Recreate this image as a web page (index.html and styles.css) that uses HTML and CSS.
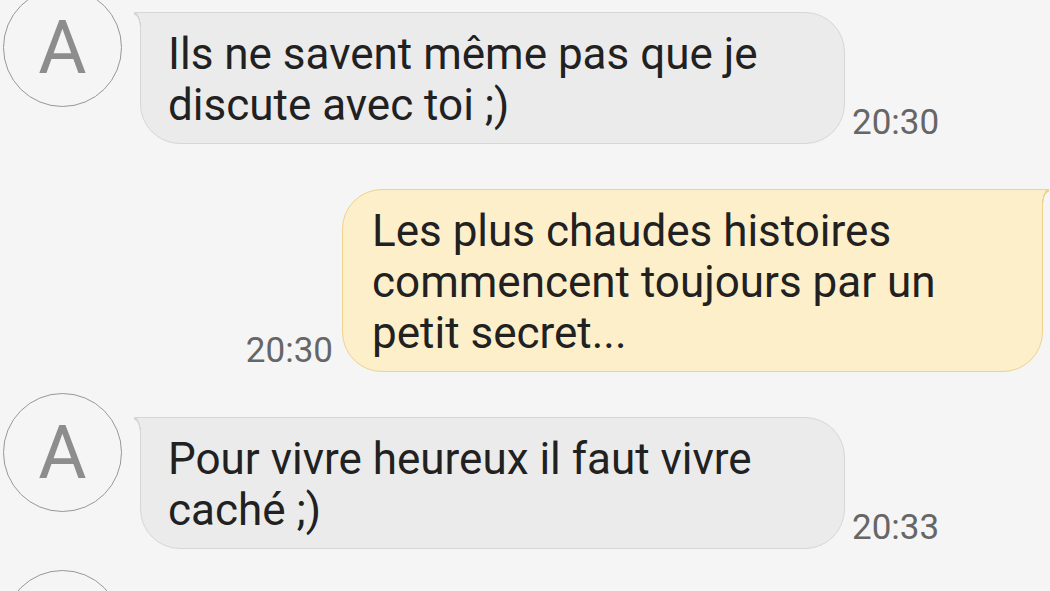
FILE: index.html
```html
<!DOCTYPE html>
<html lang="fr">
<head>
<meta charset="utf-8">
<title>Conversation</title>
<link rel="stylesheet" href="styles.css">
</head>
<body>
<div class="chat">
  <div class="row in">
    <div class="avatar">A</div>
    <div class="bubble gray">Ils ne savent même pas que je discute avec toi ;)</div>
    <div class="time">20:30</div>
  </div>
  <div class="row out">
    <div class="time">20:30</div>
    <div class="bubble yellow">Les plus chaudes histoires commencent toujours par un petit secret...</div>
  </div>
  <div class="row in">
    <div class="avatar">A</div>
    <div class="bubble gray">Pour vivre heureux il faut vivre caché ;)</div>
    <div class="time">20:33</div>
  </div>
  <div class="row in">
    <div class="avatar"></div>
    <div class="bubble gray empty"></div>
  </div>
</div>
</body>
</html>
```
FILE: styles.css
```css
html, body {
  margin: 0;
  height: 100%;
}
body {
  background: #f5f5f5;
  font-family: Roboto, "Noto Sans", sans-serif;
  overflow: hidden;
}
.chat {
  display: flex;
  flex-direction: column;
  gap: 45px;
  padding-top: 12px;
}
.row {
  display: flex;
  align-items: flex-end;
}
.row.in {
  padding-left: 3px;
}
.row.out {
  justify-content: flex-end;
  padding-right: 7px;
}
.avatar {
  flex: none;
  align-self: flex-start;
  margin-top: -24px;
  margin-right: 18px;
  width: 119px;
  height: 119px;
  box-sizing: border-box;
  border: 1.5px solid #989898;
  border-radius: 50%;
  display: flex;
  align-items: center;
  justify-content: center;
  font-size: 74px;
  font-weight: 400;
  line-height: 1;
  color: #8d8d8d;
}
.bubble {
  position: relative;
  flex: none;
  box-sizing: border-box;
  width: 705px;
  padding: 16px 28px 12px 27px;
  border: 1px solid;
  font-size: 44px;
  line-height: 51px;
  color: #212121;
}
.gray {
  background: #ebebeb;
  border-color: #d6d6d6;
  border-radius: 0 40px 40px 40px;
}
.gray::before {
  content: "";
  position: absolute;
  left: -7px;
  top: -1px;
  width: 7px;
  height: 16px;
  background:
    linear-gradient(#d6d6d6, #d6d6d6) top / 100% 1px no-repeat,
    radial-gradient(ellipse 7px 16px at 0 100%, transparent calc(100% - 1.5px), #d6d6d6 calc(100% - 1px), #d6d6d6 100%, #ebebeb 100%);
}
.yellow {
  width: 701px;
  padding-left: 29px;
  background: #fdefc9;
  border-color: #efd28c;
  border-radius: 40px 0 40px 40px;
}
.yellow::before {
  content: "";
  position: absolute;
  right: -7px;
  top: -1px;
  width: 7px;
  height: 16px;
  background:
    linear-gradient(#efd28c, #efd28c) top / 100% 1px no-repeat,
    radial-gradient(ellipse 7px 16px at 100% 100%, transparent calc(100% - 1.5px), #efd28c calc(100% - 1px), #efd28c 100%, #fdefc9 100%);
}
.empty {
  height: 120px;
}
.time {
  flex: none;
  font-size: 35px;
  line-height: 35px;
  color: #666666;
  margin: 0 0 4px 7px;
}
.out .time {
  margin: 0 9px 4px 0;
}
```
